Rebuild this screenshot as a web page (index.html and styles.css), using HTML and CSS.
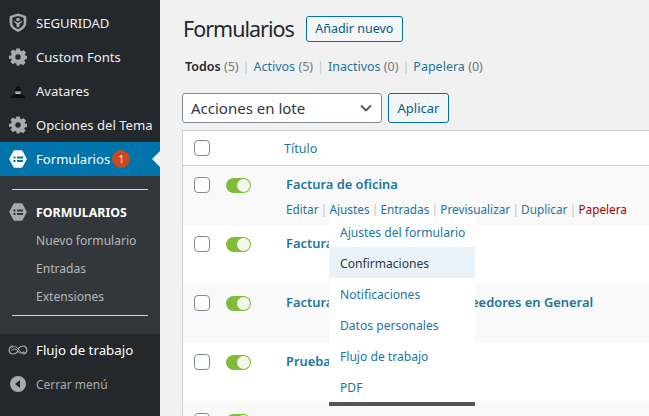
FILE: index.html
```html
<!DOCTYPE html>
<html lang="es">
<head>
    <meta charset="UTF-8">
    <title>Formularios</title>
    <link rel="stylesheet" href="styles.css">
</head>
<body>
    <div class="sidebar">
        <ul class="menu">
            <li class="menu-item">
                <svg class="menu-icon" viewBox="0 0 20 20"><path d="M10 .500l8 2.500c.5 0 .5 7 0 9-1 3-4 5-8 7-4-2-7-4-8-7-.5-2-.5-9 0-9z" fill="#a7aaad"/><path d="M10 3l5.500 1.500c.3 2 .3 5 0 7-.8 2-3 3.500-5.500 4.800-2.500-1.300-4.700-2.800-5.500-4.800-.3-2-.3-5 0-7z" fill="#23282d"/><circle cx="10" cy="6.500" r="1.800" fill="#a7aaad"/><path d="M6 7.500l3 2h2l3-2-.5 2-2 1.500v2.500l-1.500 1-1.500-1V11l-2-1.500z" fill="#a7aaad"/></svg>
                <span>SEGURIDAD</span>
            </li>
            <li class="menu-item">
                <svg class="menu-icon" viewBox="0 0 20 20"><path fill="#a7aaad" fill-rule="evenodd" d="M8 1h4l.5 2.500 1.500.7 2.200-1.400 2.700 2.800-1.400 2.200.6 1.500L20 9.300v3.400l-2.400.5-.6 1.500 1.400 2.200-2.700 2.700-2.200-1.400-1.500.6L11.500 20h-3l-.5-2.200-1.500-.6-2.200 1.400-2.700-2.700 1.400-2.200-.6-1.500L0 12.700V9.300l2.400-.5.600-1.500-1.400-2.200 2.700-2.800 2.200 1.400 1.500-.7zM10 7.500a3 3 0 1 0 0 6 3 3 0 0 0 0-6z" transform="translate(1 .5) scale(.9)"/></svg>
                <span>Custom Fonts</span>
            </li>
            <li class="menu-item">
                <svg class="menu-icon" viewBox="0 0 20 20"><path d="M7.500 9l.8-3.500h3.400L12.500 9H14v1H6V9z" fill="#0c0c0c"/><rect x="7.500" y="10" width="5" height="3" fill="#c9c9c9"/><rect x="7.500" y="10.500" width="5" height="1" fill="#444"/><path d="M3 17c0-2.500 3-4 7-4s7 1.500 7 4z" fill="#0c0c0c"/></svg>
                <span>Avatares</span>
            </li>
            <li class="menu-item">
                <svg class="menu-icon" viewBox="0 0 20 20"><path fill="#a7aaad" fill-rule="evenodd" d="M8 1h4l.5 2.500 1.500.7 2.200-1.400 2.700 2.800-1.400 2.200.6 1.500L20 9.300v3.400l-2.400.5-.6 1.500 1.400 2.200-2.700 2.700-2.200-1.400-1.500.6L11.500 20h-3l-.5-2.200-1.500-.6-2.200 1.400-2.700-2.700 1.400-2.200-.6-1.500L0 12.700V9.300l2.400-.5.600-1.500-1.400-2.200 2.700-2.800 2.200 1.400 1.500-.7zM10 7.500a3 3 0 1 0 0 6 3 3 0 0 0 0-6z" transform="translate(1 .5) scale(.9)"/></svg>
                <span>Opciones del Tema</span>
            </li>
            <li class="menu-item current">
                <svg class="menu-icon" viewBox="0 0 20 20"><path d="M6.500 2.500h7l4 7.500-4 7.500h-7L2.500 10z" fill="#fff" stroke="#fff" stroke-width="2.500" stroke-linejoin="round"/><path d="M5.500 7.500h2v2h-2zM5.500 11h2v2h-2zM9 7.500h6v2H9zM9 11h6v2H9z" fill="#0073aa"/></svg>
                <span>Formularios</span>
                <span class="badge">1</span>
            </li>
        </ul>
        <div class="submenu">
            <hr class="sub-line">
            <div class="sub-head">
                <svg class="menu-icon" viewBox="0 0 20 20"><path d="M6.500 2.500h7l4 7.500-4 7.500h-7L2.500 10z" fill="#a7aaad" stroke="#a7aaad" stroke-width="2.500" stroke-linejoin="round"/><path d="M5.500 7.500h2v2h-2zM5.500 11h2v2h-2zM9 7.500h6v2H9zM9 11h6v2H9z" fill="#32373c"/></svg>
                <span>FORMULARIOS</span>
            </div>
            <a class="sub-link">Nuevo formulario</a>
            <a class="sub-link">Entradas</a>
            <a class="sub-link">Extensiones</a>
            <hr class="sub-line last">
        </div>
        <ul class="menu">
            <li class="menu-item flow">
                <svg class="menu-icon" viewBox="0 0 20 20"><path d="M5 6c-5 0-5 8 0 8 2.500 0 4-1.500 5-3M15 14c5 0 5-8 0-8-2.500 0-4 1.500-5 3" fill="none" stroke="#a7aaad" stroke-width="1.200"/><path d="M3.500 8C5 6.500 7 6 9 7.500l3.500 4.500c2 1.500 3.500 1 4.500 0M3 11c1-1 3-3 6-1l2 2.500c2 1.500 4 0 5-1" fill="none" stroke="#a7aaad" stroke-width="1"/></svg>
                <span>Flujo de trabajo</span>
            </li>
            <li class="menu-item collapse">
                <svg class="menu-icon" viewBox="0 0 20 20"><circle cx="10" cy="10" r="8" fill="#a7aaad"/><path d="M12 6v8L7 10z" fill="#23282d"/></svg>
                <span>Cerrar menú</span>
            </li>
        </ul>
    </div>

    <div class="content">
        <div class="title-row">
            <h1>Formularios</h1>
            <a class="btn add-new">Añadir nuevo</a>
        </div>
        <div class="filters">
            <strong>Todos</strong> <span class="count">(5)</span><span class="sep">|</span><a>Activos</a> <span class="count">(5)</span><span class="sep">|</span><a>Inactivos</a> <span class="count">(0)</span><span class="sep">|</span><a>Papelera</a> <span class="count">(0)</span>
        </div>
        <div class="bulk-row">
            <div class="select">
                <span>Acciones en lote</span>
                <svg width="14" height="14" viewBox="0 0 14 14"><path d="M2 4.500l5 5 5-5" fill="none" stroke="#50575e" stroke-width="1.800"/></svg>
            </div>
            <a class="btn apply">Aplicar</a>
        </div>
        <div class="table">
            <div class="table-head">
                <span class="check"></span>
                <a class="col-title">Título</a>
            </div>
            <div class="row alt">
                <span class="check"></span><span class="toggle"></span>
                <div class="row-body">
                    <a class="form-name">Factura de oficina</a>
                    <div class="row-actions">
                        <a>Editar</a><span class="sep">|</span><a>Ajustes</a><span class="sep">|</span><a>Entradas</a><span class="sep">|</span><a>Previsualizar</a><span class="sep">|</span><a>Duplicar</a><span class="sep">|</span><a class="trash">Papelera</a>
                    </div>
                </div>
            </div>
            <div class="row">
                <span class="check"></span><span class="toggle"></span>
                <div class="row-body"><a class="form-name">Factura de clientes</a></div>
            </div>
            <div class="row alt">
                <span class="check"></span><span class="toggle"></span>
                <div class="row-body"><a class="form-name">Factura de mercancía de Proveedores en General</a></div>
            </div>
            <div class="row">
                <span class="check"></span><span class="toggle"></span>
                <div class="row-body"><a class="form-name">Prueba de formulario</a></div>
            </div>
            <div class="row alt">
                <span class="check"></span><span class="toggle"></span>
                <div class="row-body"><a class="form-name">Test</a></div>
            </div>
            <ul class="popup">
                <li>Ajustes del formulario</li>
                <li class="active">Confirmaciones</li>
                <li>Notificaciones</li>
                <li>Datos personales</li>
                <li>Flujo de trabajo</li>
                <li>PDF</li>
            </ul>
        </div>
    </div>
</body>
</html>
```

FILE: styles.css
```css
* {
    box-sizing: border-box;
}
html, body {
    height: 100%;
}
body {
    margin: 0;
    display: flex;
    overflow: hidden;
    background-color: #f1f1f1;
    color: #32373c;
    font-family: "Noto Sans", "Open Sans", sans-serif;
    font-size: 12.5px;
}
a {
    color: #21759b;
}

/* sidebar */
.sidebar {
    width: 160px;
    flex-shrink: 0;
    padding-top: 6px;
    background-color: #23282d;
    color: #eee;
}
.menu {
    list-style: none;
    margin: 0;
    padding: 0;
}
.menu-item {
    position: relative;
    display: flex;
    align-items: center;
    height: 34px;
    padding-left: 8px;
    font-size: 13.100px;
    color: #eee;
}
.menu-item .menu-icon {
    margin-right: 8px;
}
.menu-icon {
    width: 20px;
    height: 20px;
    flex-shrink: 0;
}
.menu-item.current {
    background-color: #0073aa;
    color: #fff;
}
.menu-item.current::after {
    content: "";
    position: absolute;
    right: 0;
    top: 9px;
    border: 8px solid transparent;
    border-right-color: #f1f1f1;
    border-left-width: 0;
}
.badge {
    width: 18px;
    height: 18px;
    margin-left: 2px;
    border-radius: 50%;
    background-color: #ca4a1f;
    color: #fff;
    font-size: 10.500px;
    line-height: 18px;
    text-align: center;
}
.submenu {
    height: 158px;
    padding-top: 13px;
    background-color: #32373c;
}
.sub-line {
    height: 1px;
    margin: 0 12px;
    border: 0;
    background-color: #d5d6d7;
}
.sub-line.last {
    margin-top: 5px;
}
.sub-head {
    display: flex;
    align-items: center;
    height: 28px;
    margin-top: 8px;
    padding-left: 8px;
    font-size: 12.400px;
    font-weight: 700;
    color: #fff;
}
.sub-head .menu-icon {
    margin-right: 8px;
}
.sub-link {
    display: block;
    height: 28px;
    padding-left: 36px;
    font-size: 12.100px;
    line-height: 29px;
    color: #b4b9be;
}
.menu-item.flow {
    margin-top: -1px;
    font-size: 13.300px;
    color: #fff;
}
.menu-item.collapse {
    font-size: 12px;
    color: #a7aaad;
}

/* main area */
.content {
    flex: 1;
    min-width: 0;
    padding: 15px 0 0 22px;
}
.title-row {
    display: flex;
    align-items: center;
    height: 27px;
    padding-left: 1px;
}
h1 {
    margin: 0 12px 0 0;
    font-size: 21.500px;
    letter-spacing: -1px;
    font-weight: 400;
    color: #23282d;
}
.btn {
    display: block;
    border: 1px solid #0071a1;
    border-radius: 3px;
    background-color: #f3f5f6;
    color: #016087;
}
.add-new {
    width: 97px;
    height: 26px;
    font-size: 12.500px;
    line-height: 24px;
    text-align: center;
}
.filters {
    margin-top: 15px;
    padding-left: 3px;
    font-size: 12.500px;
    line-height: 20px;
    color: #72777c;
}
.filters strong {
    color: #23282d;
    font-weight: 600;
}
.sep {
    margin: 0 4px;
    color: #c3c4c7;
}
.bulk-row {
    display: flex;
    gap: 6px;
    margin-top: 16px;
}
.select {
    display: flex;
    align-items: center;
    justify-content: space-between;
    width: 200px;
    height: 30px;
    padding: 0 8px;
    border: 1px solid #7e8993;
    border-radius: 3px;
    background-color: #fff;
    font-size: 15px;
    color: #32373c;
}
.apply {
    width: 61px;
    height: 30px;
    font-size: 13px;
    line-height: 28px;
    text-align: center;
}
.table {
    position: relative;
    width: 467px;
    margin-top: 7px;
    border: 1px solid #ccd0d4;
    border-right: 0;
    background-color: #fff;
}
.table-head {
    display: flex;
    align-items: center;
    height: 35px;
    padding-left: 11px;
    border-bottom: 1px solid #ccd0d4;
}
.check {
    width: 16px;
    height: 16px;
    flex-shrink: 0;
    border: 1px solid #7e8993;
    border-radius: 4px;
    background-color: #fff;
}
.col-title {
    margin-left: 74px;
    font-size: 12.500px;
}
.row {
    display: flex;
    height: 59px;
    padding: 11px 0 0 11px;
    background-color: #fff;
}
.row.alt {
    background-color: #f9f9f9;
}
.toggle {
    position: relative;
    width: 25px;
    height: 15px;
    margin: 1px 0 0 16px;
    flex-shrink: 0;
    border-radius: 8px;
    background-color: #80bb3c;
}
.toggle::after {
    content: "";
    position: absolute;
    top: 1px;
    right: 1px;
    width: 13px;
    height: 13px;
    border-radius: 50%;
    background-color: #f3f6ea;
}
.row-body {
    margin-top: -1px;
    margin-left: 35px;
    min-width: 0;
    white-space: nowrap;
}
.form-name {
    display: block;
    font-size: 12.900px;
    font-weight: 600;
    line-height: 16px;
}
.row-actions {
    margin-top: 9px;
    font-size: 11.800px;
    line-height: 16px;
}
.row-actions .sep {
    margin: 0 2.200px;
}
.trash {
    color: #a00;
}
.popup {
    position: absolute;
    top: 85px;
    left: 146px;
    width: 146px;
    margin: 0;
    padding: 0;
    border-bottom: 4px solid #555;
    background-color: #fff;
    list-style: none;
    font-size: 12.100px;
    color: #21759b;
}
.popup li {
    height: 31px;
    padding-left: 11px;
    line-height: 33px;
}
.popup .active {
    background-color: #e9f2f9;
    color: #32373c;
}
```
